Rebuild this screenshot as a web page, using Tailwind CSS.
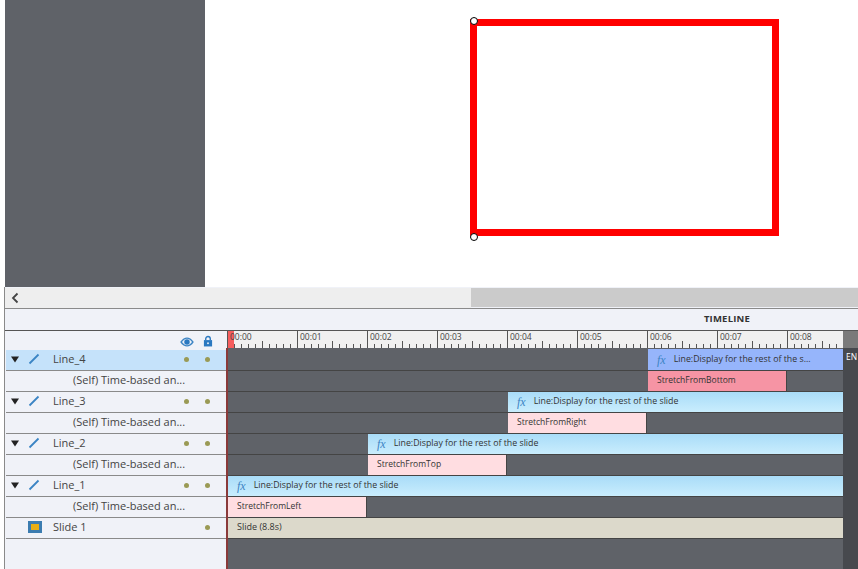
<!DOCTYPE html>
<html><head><meta charset="utf-8"><script src="https://cdn.jsdelivr.net/npm/@tailwindcss/browser@4"></script></head>
<body class="w-[858px] h-[569px] overflow-hidden bg-white font-['Open_Sans',sans-serif] text-[#333]">
<div class="flex flex-col h-[569px] pl-[4px]">
  <div class="flex h-[287px] relative border-l border-white">
    <div class="w-[200px] bg-[#5f6268]"></div>
    <div class="flex-1 bg-white"></div>
    <div class="absolute left-[465px] top-[19px] w-[309px] h-[217px] border-[7px] border-[#ff0000]"></div>
    <div class="absolute left-[465px] top-[17px] w-[8px] h-[8px] rounded-full bg-white border border-black"></div>
    <div class="absolute left-[465px] top-[233px] w-[8px] h-[8px] rounded-full bg-white border border-black"></div>
  </div>
  <div class="flex-1 flex flex-col border-l border-[#8a8a8a] bg-[#f0f2f8]">
    <div class="flex h-[21px] mt-px bg-[#eeeeee] border-b border-[#8a8a8a]">
      <div class="w-[466px] flex items-center pl-[5px]">
        <svg width="10" height="12" viewBox="0 0 10 12"><path d="M7.5 1.5 3 6l4.5 4.5" fill="none" stroke="#444" stroke-width="1.8"/></svg>
      </div>
      <div class="flex-1 bg-[#cbcbcb] border-b border-[#f0f2f8]"></div>
    </div>
    <div class="flex h-[22px] items-center justify-end pr-[108px] border-b border-[#555] text-[9.5px] font-bold tracking-[0.2px] text-[#333]">TIMELINE</div>
    <div class="flex h-[19px]">
      <div class="w-[222px] flex items-start justify-end gap-[8px] pt-[4px] pr-[14px]">
        <svg class="mt-[2px]" width="16" height="10" viewBox="0 0 16 11"><path d="M0.5 5.5C3 1.8 5.5 0.5 8 0.5s5 1.3 7.5 5c-2.500 3.700-5 5-7.500 5s-5-1.300-7.500-5z" fill="#3b84c4"/><path d="M2.500 5.500C4.500 3 6.200 2 8 2s3.500 1 5.500 3.500C11.500 8 9.800 9 8 9S4.500 8 2.500 5.500z" fill="#f0f2f8"/><circle cx="8" cy="5.500" r="3" fill="#2a78c0"/></svg>
        <svg width="10" height="12" viewBox="0 0 11 12"><path d="M3 5V3.500a2.500 2.500 0 0 1 5 0V5" fill="none" stroke="#2a78c0" stroke-width="1.500"/><rect x="1" y="5" width="9" height="7" fill="#2a78c0"/><circle cx="5.500" cy="8.500" r="1" fill="#f0f2f8"/></svg>
      </div>
      <div class="flex-1 relative bg-[#f0f0f0] overflow-hidden">
        <div class="absolute left-0 top-0 w-[7px] h-[19px] bg-[#f55d5d]"></div>
        <svg class="absolute left-0 top-0" width="630" height="19"><defs><pattern id="t" width="70" height="19" patternUnits="userSpaceOnUse"><path d="M0.500 0V19M7.500 13V17M14.500 13V17M21.500 13V17M28.500 13V17M35.500 10V17M42.500 13V17M49.500 13V17M56.500 13V17M63.500 13V17" stroke="#555" stroke-width="1"/></pattern></defs><rect width="630" height="19" fill="url(#t)"/></svg>
        <div class="relative flex text-[8.500px] leading-[11px] text-[#444] pl-[3px]">
          <span class="w-[70px] shrink-0">00:00</span><span class="w-[70px] shrink-0">00:01</span><span class="w-[70px] shrink-0">00:02</span><span class="w-[70px] shrink-0">00:03</span><span class="w-[70px] shrink-0">00:04</span><span class="w-[70px] shrink-0">00:05</span><span class="w-[70px] shrink-0">00:06</span><span class="w-[70px] shrink-0">00:07</span><span class="w-[70px] shrink-0">00:08</span>
        </div>
      </div>
      <div class="w-[15px] bg-[#7a7a7a]"></div>
    </div>
    <div class="flex flex-1">
      <div class="w-[220px] ml-px text-[11px] text-[#444] flex flex-col">
        <div class="flex items-center h-[21px] pb-[2px] bg-[#c5e2fa] border-b border-[#8a8a8a]">
          <svg class="ml-[4px]" width="10" height="7" viewBox="0 0 10 7"><path d="M1 0.500h8L5 6.500z" fill="#222"/></svg>
          <svg class="ml-[8px]" width="12" height="12" viewBox="0 0 12 12"><path d="M1.500 10.500 10.500 1.500" stroke="#3b84c4" stroke-width="1.800"/></svg>
          <span class="ml-[13px] w-[131px]">Line_4</span>
          <span class="w-[5px] h-[5px] rounded-full bg-[#9a9a55]"></span><span class="ml-[16px] w-[5px] h-[5px] rounded-full bg-[#9a9a55]"></span>
        </div>
        <div class="flex items-center h-[21px] pb-[2px] pl-[67px] border-b border-[#8a8a8a]">(Self) Time-based an...</div>
        <div class="flex items-center h-[21px] pb-[2px] border-b border-[#8a8a8a]">
          <svg class="ml-[4px]" width="10" height="7" viewBox="0 0 10 7"><path d="M1 0.500h8L5 6.500z" fill="#222"/></svg>
          <svg class="ml-[8px]" width="12" height="12" viewBox="0 0 12 12"><path d="M1.500 10.500 10.500 1.500" stroke="#3b84c4" stroke-width="1.800"/></svg>
          <span class="ml-[13px] w-[131px]">Line_3</span>
          <span class="w-[5px] h-[5px] rounded-full bg-[#9a9a55]"></span><span class="ml-[16px] w-[5px] h-[5px] rounded-full bg-[#9a9a55]"></span>
        </div>
        <div class="flex items-center h-[21px] pb-[2px] pl-[67px] border-b border-[#8a8a8a]">(Self) Time-based an...</div>
        <div class="flex items-center h-[21px] pb-[2px] border-b border-[#8a8a8a]">
          <svg class="ml-[4px]" width="10" height="7" viewBox="0 0 10 7"><path d="M1 0.500h8L5 6.500z" fill="#222"/></svg>
          <svg class="ml-[8px]" width="12" height="12" viewBox="0 0 12 12"><path d="M1.500 10.500 10.500 1.500" stroke="#3b84c4" stroke-width="1.800"/></svg>
          <span class="ml-[13px] w-[131px]">Line_2</span>
          <span class="w-[5px] h-[5px] rounded-full bg-[#9a9a55]"></span><span class="ml-[16px] w-[5px] h-[5px] rounded-full bg-[#9a9a55]"></span>
        </div>
        <div class="flex items-center h-[21px] pb-[2px] pl-[67px] border-b border-[#8a8a8a]">(Self) Time-based an...</div>
        <div class="flex items-center h-[21px] pb-[2px] border-b border-[#8a8a8a]">
          <svg class="ml-[4px]" width="10" height="7" viewBox="0 0 10 7"><path d="M1 0.500h8L5 6.500z" fill="#222"/></svg>
          <svg class="ml-[8px]" width="12" height="12" viewBox="0 0 12 12"><path d="M1.500 10.500 10.500 1.500" stroke="#3b84c4" stroke-width="1.800"/></svg>
          <span class="ml-[13px] w-[131px]">Line_1</span>
          <span class="w-[5px] h-[5px] rounded-full bg-[#9a9a55]"></span><span class="ml-[16px] w-[5px] h-[5px] rounded-full bg-[#9a9a55]"></span>
        </div>
        <div class="flex items-center h-[21px] pb-[2px] pl-[67px] border-b border-[#8a8a8a]">(Self) Time-based an...</div>
        <div class="flex items-center h-[21px] pb-[2px] border-b border-[#8a8a8a]">
          <div class="ml-[22px] w-[14px] h-[12px] bg-[#e8ae14] border-[3px] border-[#3b7cb0]"></div>
          <span class="ml-[11px] w-[152px]">Slide 1</span>
          <span class="w-[5px] h-[5px] rounded-full bg-[#9a9a55]"></span>
        </div>
      </div>
      <div class="flex-1 flex flex-col relative -mt-[2px] bg-[#5f6268] border-l-2 border-[#8a3a3a] text-[8.500px] text-[#333]">
        <div class="flex h-[23px] pt-px border-b border-[#444]"><div class="w-[420px]"></div><div class="flex-1 flex items-center pl-[9px] bg-[#96b5fb]"><i class="font-['Liberation_Serif',serif] text-[12px] leading-[12px] text-[#3b84c4] mr-[8px]">fx</i><span class="text-[8.800px]">Line:Display for the rest of the s...</span></div></div>
        <div class="flex h-[21px] border-b border-[#444]"><div class="w-[420px]"></div><div class="w-[139px] flex items-center pl-[9px] pb-[2px] bg-[#f694a4] border-r border-[#444]">StretchFromBottom</div></div>
        <div class="flex h-[21px] border-b border-[#444]"><div class="w-[280px]"></div><div class="flex-1 flex items-center pl-[9px] pb-[1px] bg-linear-to-b from-[#a9dcf8] to-[#c9edfd]"><i class="font-['Liberation_Serif',serif] text-[12px] leading-[12px] text-[#3b84c4] mr-[8px]">fx</i><span class="text-[8.800px]">Line:Display for the rest of the slide</span></div></div>
        <div class="flex h-[21px] border-b border-[#444]"><div class="w-[280px]"></div><div class="w-[139px] flex items-center pl-[9px] pb-[2px] bg-[#ffdde1] border-r border-[#444]">StretchFromRight</div></div>
        <div class="flex h-[21px] border-b border-[#444]"><div class="w-[140px]"></div><div class="flex-1 flex items-center pl-[9px] pb-[1px] bg-linear-to-b from-[#a9dcf8] to-[#c9edfd]"><i class="font-['Liberation_Serif',serif] text-[12px] leading-[12px] text-[#3b84c4] mr-[8px]">fx</i><span class="text-[8.800px]">Line:Display for the rest of the slide</span></div></div>
        <div class="flex h-[21px] border-b border-[#444]"><div class="w-[140px]"></div><div class="w-[139px] flex items-center pl-[9px] pb-[2px] bg-[#ffdde1] border-r border-[#444]">StretchFromTop</div></div>
        <div class="flex h-[21px] border-b border-[#444]"><div class="flex-1 flex items-center pl-[9px] pb-[1px] bg-linear-to-b from-[#a9dcf8] to-[#c9edfd]"><i class="font-['Liberation_Serif',serif] text-[12px] leading-[12px] text-[#3b84c4] mr-[8px]">fx</i><span class="text-[8.800px]">Line:Display for the rest of the slide</span></div></div>
        <div class="flex h-[21px] border-b border-[#444]"><div class="w-[139px] flex items-center pl-[9px] pb-[2px] bg-[#ffdde1] border-r border-[#444]">StretchFromLeft</div></div>
        <div class="flex h-[21px] border-b border-[#444]"><div class="flex-1 flex items-center pl-[9px] pb-[2px] bg-[#dcd9cb]"><span class="text-[9px]">Slide (8.8s)</span></div></div>
      </div>
      <div class="w-[15px] -mt-[2px] relative bg-[#47494e] text-[8.500px] leading-[12px] text-white pl-[3px] pt-[3px] overflow-hidden"><span class="block w-[12px] overflow-hidden">EN</span></div>
    </div>
  </div>
</div>
</body></html>
